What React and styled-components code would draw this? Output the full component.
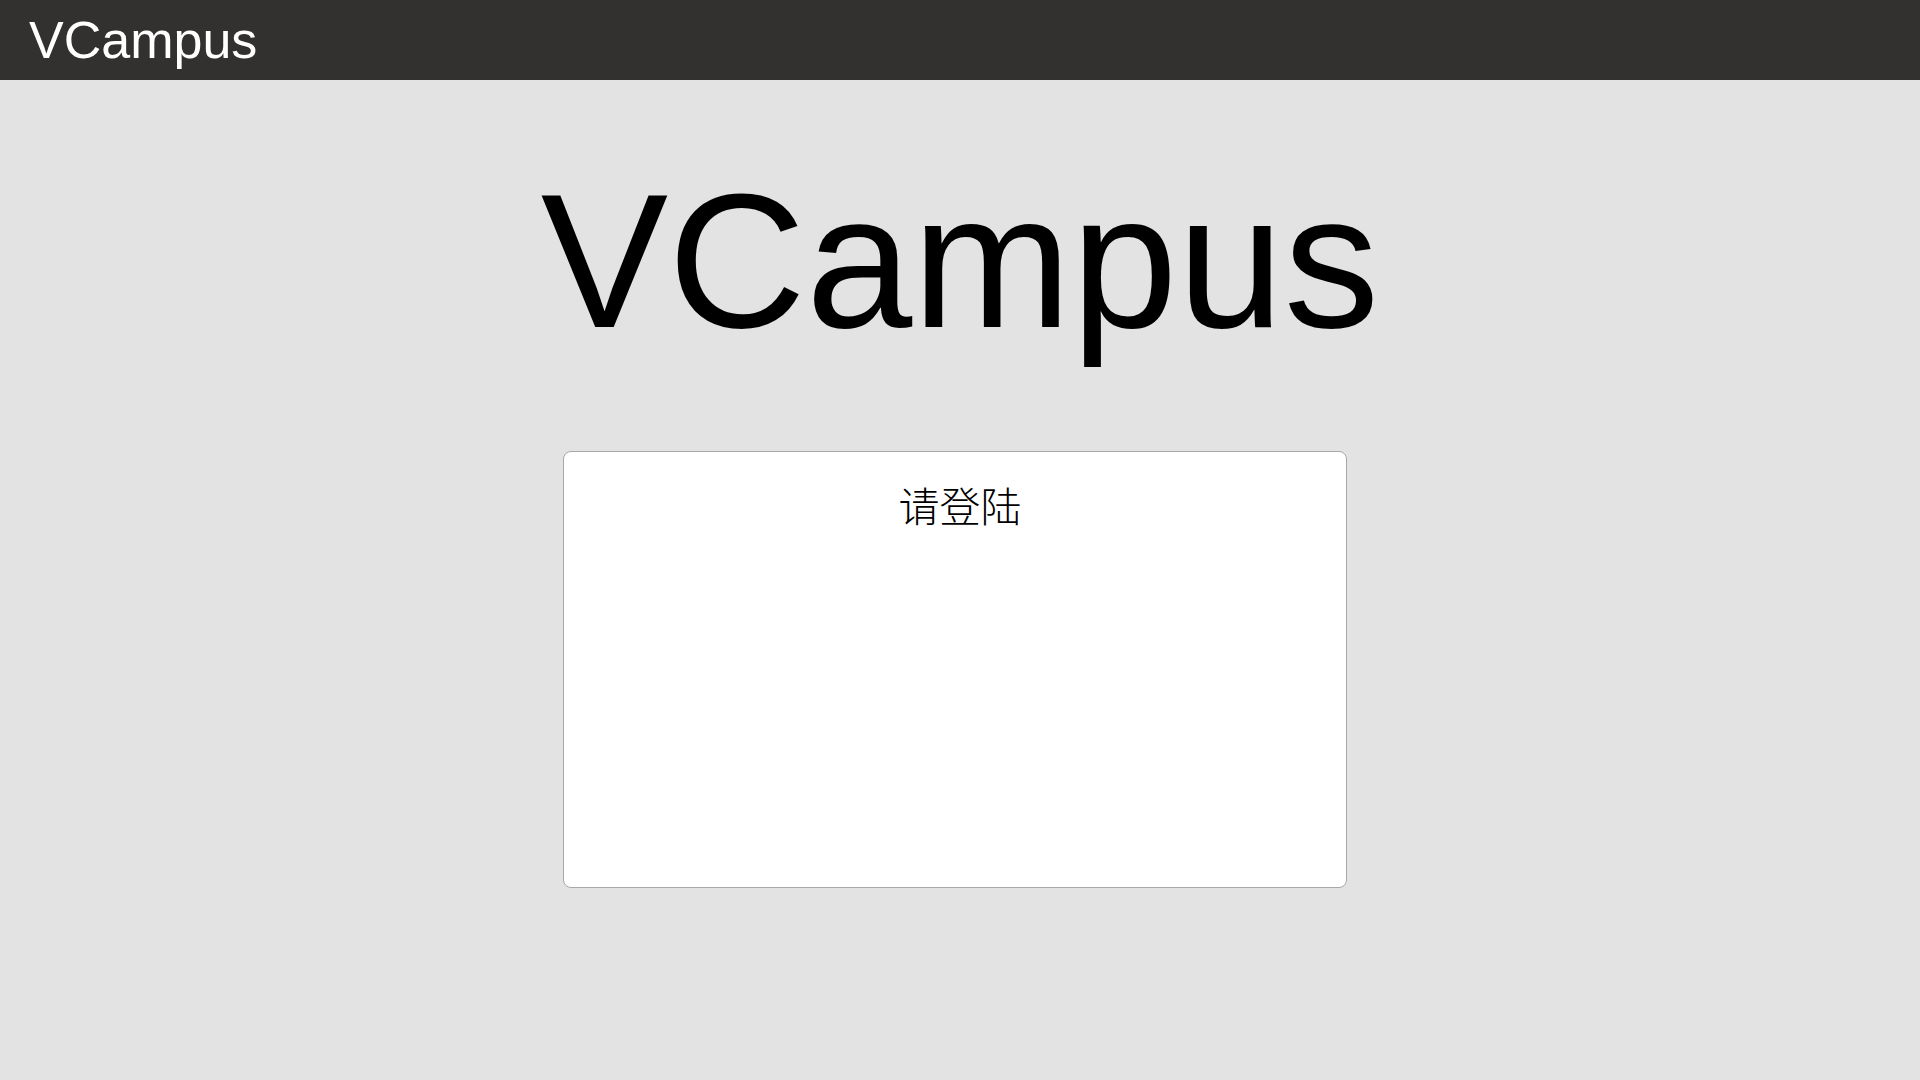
import styled, { createGlobalStyle } from "styled-components";

const GlobalStyle = createGlobalStyle`
  html, body {
    margin: 0;
    padding: 0;
    background: #e3e3e3;
    font-family: "Liberation Sans", Arial, sans-serif;
  }
  * {
    box-sizing: border-box;
  }
`;

const Page = styled.div`
  min-height: 1080px;
  background: #e3e3e3;
`;

const TopBar = styled.header`
  height: 80px;
  background: #333130;
  display: flex;
  align-items: center;
  padding-left: 29px;
`;

const Brand = styled.h1`
  margin: 0;
  font-size: 52px;
  font-weight: 400;
  line-height: 80px;
  color: #ffffff;
`;

const Main = styled.main`
  display: flex;
  flex-direction: column;
  padding-top: 71px;
`;

const Hero = styled.h2`
  margin: 0;
  text-align: center;
  font-size: 191px;
  font-weight: 400;
  color: #000000;
  line-height: normal;
`;

const LoginCard = styled.section`
  margin: 81px 0 0 563px;
  width: 784px;
  height: 437px;
  background: #ffffff;
  border: 1px solid #a8a8a8;
  border-radius: 8px;
  padding-top: 32px;
`;

const CardTitle = styled.p`
  margin: 0 0 0 10px;
  text-align: center;
  font-family: "Noto Sans CJK SC", "Noto Sans", sans-serif;
  font-weight: 200;
  font-size: 41px;
  line-height: 41px;
  color: #000000;
`;

const App = () => {
  return (
    <Page>
      <GlobalStyle />
      <TopBar>
        <Brand>VCampus</Brand>
      </TopBar>
      <Main>
        <Hero>VCampus</Hero>
        <LoginCard>
          <CardTitle>请登陆</CardTitle>
        </LoginCard>
      </Main>
    </Page>
  );
};

export default App;
